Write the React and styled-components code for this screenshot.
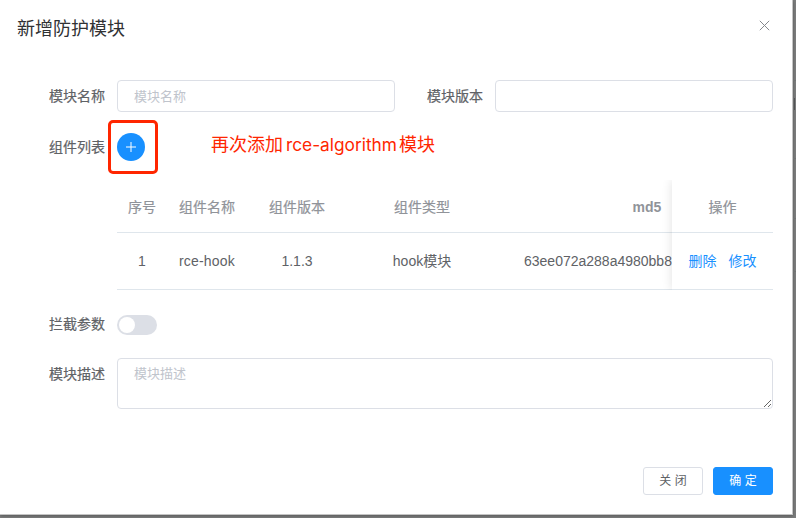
import React from "react";
import styled, { createGlobalStyle } from "styled-components";

const GlobalStyle = createGlobalStyle`
  *, *::before, *::after { box-sizing: border-box; }
  body {
    margin: 0;
    overflow: hidden;
    background: #7c7d7d;
    color: #606266;
    font: 14px/20px "Liberation Sans", "Noto Sans CJK SC", sans-serif;
  }
  button, input, textarea { font: inherit; margin: 0; }
`;

const Page = styled.div`
  display: flex;
  align-items: flex-start;
  width: 796px;
  height: 518px;
  overflow: hidden;
`;

const Dialog = styled.section`
  display: flex;
  flex: none;
  flex-direction: column;
  width: 793px;
  height: 515px;
  background: #fff;
  border-right: 1px solid #c4c4c4;
  border-bottom: 1px solid #c4c4c4;
  box-shadow: 0 1px 3px rgba(0, 0, 0, 0.3);
`;

const PageEdge = styled.div`
  flex: 1;
  display: grid;
  grid-template-rows: 81px 17px 12px 49px 60px 53px;
`;

const EdgeLine = styled.span`
  border-bottom: 1px solid #707272;
`;

const EdgeMark = styled.span`
  width: 1px;
  margin-left: 1px;
  background: #505254;
`;

const Header = styled.header`
  display: flex;
  justify-content: space-between;
  height: 80px;
  padding: 17px 21px 0 17px;
`;

const Title = styled.h1`
  margin: 0;
  color: #303133;
  font-size: 18px;
  font-weight: 400;
  line-height: 24px;
`;

const CloseButton = styled.button`
  display: flex;
  width: 14px;
  height: 16px;
  padding: 0;
  align-items: center;
  justify-content: center;
  border: 0;
  background: none;
  color: #85888d;
`;

const Form = styled.form`
  display: flex;
  flex: 1;
  flex-direction: column;
  padding: 0 19px 19px 0;
`;

const Field = styled.div`
  display: flex;
  width: ${({ $half }) => ($half ? "395px" : "auto")};
  flex: ${({ $grow }) => ($grow ? 1 : "none")};
`;

const Label = styled.label`
  flex: none;
  width: ${({ $width }) => $width || 117}px;
  padding-right: 12px;
  text-align: right;
  line-height: 32px;
  -webkit-text-stroke: 0.2px currentColor;
`;

const FieldRow = styled.div`
  display: flex;
  height: 32px;
`;

const TextInput = styled.input`
  flex: 1;
  min-width: 0;
  height: 32px;
  padding: 0 16px;
  border: 1px solid #dcdfe6;
  border-radius: 4px;
  outline: 0;
  background: #fff;
  font-size: 13px;
  &::placeholder { color: #c0c4cc; }
`;

const ComponentRow = styled.div`
  display: flex;
  height: 54px;
  margin-top: 8px;
  align-items: center;
`;

const Highlight = styled.div`
  display: flex;
  width: 50px;
  height: 54px;
  margin-left: -9px;
  align-items: center;
  justify-content: center;
  border: 3px solid #ff2600;
  border-radius: 5px;
`;

const AddButton = styled.button`
  display: flex;
  width: 28px;
  height: 28px;
  margin-right: 4px;
  padding: 0;
  align-items: center;
  justify-content: center;
  border: 0;
  border-radius: 50%;
  background: #1890ff;
  color: #fff;
`;

const Note = styled.p`
  margin: 0 0 5px 53px;
  color: #ff2600;
  font: 18px/24px Inter, "Noto Sans CJK SC", sans-serif;
  white-space: nowrap;
`;

const NoteTerm = styled.span`
  margin: 0 2px 0 3px;
  font-size: 17.3px;
`;

const TableFrame = styled.div`
  display: flex;
  width: 656px;
  height: 110px;
  margin: 6px 0 0 117px;
`;

const ScrollPane = styled.div`
  flex: 1;
  min-width: 0;
  overflow: hidden;
`;

const TableRow = styled.div`
  display: grid;
  width: 680px;
  height: ${({ $head }) => ($head ? 53 : 57)}px;
  padding-top: ${({ $head }) => ($head ? 2 : 0)}px;
  grid-template-columns: 50px 80px 100px 150px 300px;
  align-items: center;
  border-bottom: 1px solid #dfe6ec;
  color: ${({ $head }) => ($head ? "#909399" : "#606266")};
  text-align: center;
  white-space: nowrap;
  -webkit-text-stroke: ${({ $head }) => ($head ? "0.2px currentColor" : "0")};
`;

const Strong = styled.span`
  font-weight: 700;
  -webkit-text-stroke: 0;
`;

const ComponentName = styled.span`
  letter-spacing: 0.2px;
`;

const Hash = styled.span`
  padding-left: 27px;
  text-align: left;
`;

const FixedPane = styled.div`
  width: 101px;
  box-shadow: 0 0 10px rgba(0, 0, 0, 0.12);
  clip-path: inset(0 0 0 -12px);
  background: #fff;
`;

const FixedRow = styled.div`
  display: flex;
  height: ${({ $head }) => ($head ? 53 : 57)}px;
  padding-top: ${({ $head }) => ($head ? 2 : 0)}px;
  align-items: center;
  justify-content: center;
  gap: 12px;
  border-bottom: 1px solid #dfe6ec;
  color: #909399;
  -webkit-text-stroke: ${({ $head }) => ($head ? "0.2px currentColor" : "0")};
`;

const Action = styled.button`
  padding: 0;
  border: 0;
  background: none;
  color: #1890ff;
`;

const SwitchField = styled(Field)`
  margin-top: 18px;
  height: 32px;
`;

const Switch = styled.button`
  width: 40px;
  height: 20px;
  margin-top: 7px;
  padding: 2px;
  border: 0;
  border-radius: 10px;
  background: #dcdfe6;
`;

const Thumb = styled.span`
  display: block;
  width: 16px;
  height: 16px;
  border-radius: 50%;
  background: #fff;
`;

const DescriptionField = styled(Field)`
  margin-top: 18px;
`;

const TextArea = styled.textarea`
  flex: 1;
  height: 51px;
  padding: 5px 16px;
  border: 1px solid #dcdfe6;
  border-radius: 4px;
  outline: 0;
  font-size: 13px;
  line-height: 20px;
  resize: vertical;
  &::placeholder { color: #c0c4cc; }
`;

const Footer = styled.footer`
  display: flex;
  justify-content: flex-end;
  gap: 10px;
  margin-top: auto;
`;

const Button = styled.button`
  width: 60px;
  height: 28px;
  padding: 0;
  border: 1px solid ${({ $primary }) => ($primary ? "#1890ff" : "#dcdfe6")};
  border-radius: 3px;
  background: ${({ $primary }) => ($primary ? "#1890ff" : "#fff")};
  color: ${({ $primary }) => ($primary ? "#fff" : "#606266")};
  font-size: 12px;
  line-height: 20px;
`;

const CloseIcon = () => (
  <svg width="11" height="11" viewBox="0 0 11 11" fill="none" stroke="currentColor" strokeWidth="1">
    <path d="M.8.8l9.4 9.4M10.2.8.8 10.2" />
  </svg>
);

const PlusIcon = () => (
  <svg width="10" height="10" viewBox="0 0 10 10" fill="none" stroke="currentColor" strokeWidth="1">
    <path d="M5 0v10M0 5h10" />
  </svg>
);

export default function App() {
  return (
    <Page>
      <GlobalStyle />
      <Dialog role="dialog">
        <Header>
          <Title>新增防护模块</Title>
          <CloseButton type="button"><CloseIcon /></CloseButton>
        </Header>
        <Form onSubmit={(e) => e.preventDefault()}>
          <FieldRow>
            <Field $half>
              <Label>模块名称</Label>
              <TextInput placeholder="模块名称" />
            </Field>
            <Field $grow>
              <Label $width={100}>模块版本</Label>
              <TextInput />
            </Field>
          </FieldRow>
          <ComponentRow>
            <Label>组件列表</Label>
            <Highlight>
              <AddButton type="button"><PlusIcon /></AddButton>
            </Highlight>
            <Note>再次添加<NoteTerm>rce-algorithm</NoteTerm>模块</Note>
          </ComponentRow>
          <TableFrame>
            <ScrollPane>
              <TableRow $head>
                <span>序号</span>
                <span>组件名称</span>
                <span>组件版本</span>
                <span>组件类型</span>
                <Strong>md5</Strong>
              </TableRow>
              <TableRow>
                <span>1</span>
                <ComponentName>rce-hook</ComponentName>
                <span>1.1.3</span>
                <span>hook模块</span>
                <Hash>63ee072a288a4980bb8</Hash>
              </TableRow>
            </ScrollPane>
            <FixedPane>
              <FixedRow $head>操作</FixedRow>
              <FixedRow>
                <Action type="button">删除</Action>
                <Action type="button">修改</Action>
              </FixedRow>
            </FixedPane>
          </TableFrame>
          <SwitchField>
            <Label>拦截参数</Label>
            <Switch type="button" role="switch" aria-checked="false"><Thumb /></Switch>
          </SwitchField>
          <DescriptionField>
            <Label>模块描述</Label>
            <TextArea placeholder="模块描述" />
          </DescriptionField>
          <Footer>
            <Button type="button">关 闭</Button>
            <Button type="submit" $primary>确 定</Button>
          </Footer>
        </Form>
      </Dialog>
      <PageEdge>
        <EdgeLine />
        <span />
        <EdgeMark />
        <EdgeLine />
        <EdgeLine />
        <EdgeLine />
      </PageEdge>
    </Page>
  );
}
